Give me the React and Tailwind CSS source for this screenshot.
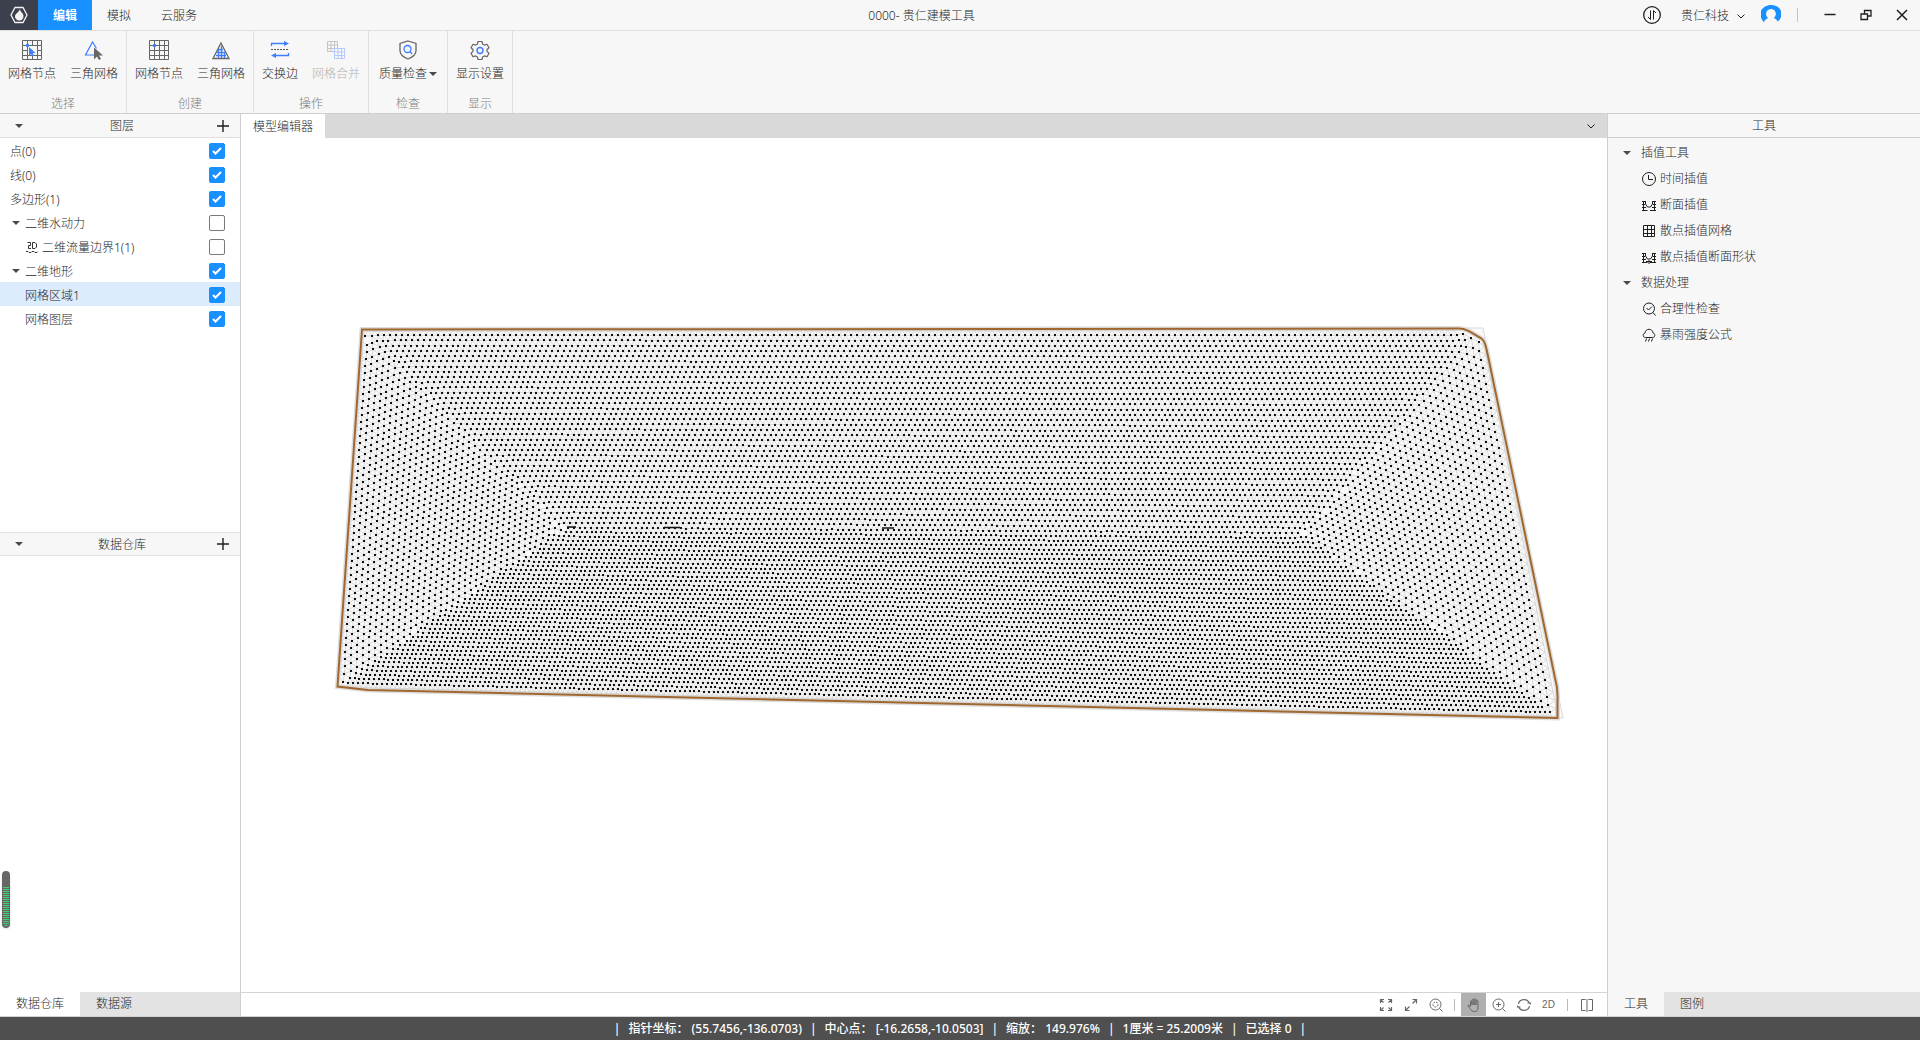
import React, { useMemo, useState } from "react";

const SEAM_LEFT = [566, 528];
const SEAM_RIGHT = [1300, 533];
const LAYERS = 38;

// corners of the grid area, with the end of the centre seam that each side shrinks to
const SIDES = [
  { from: [362, 330], to: [1478, 330], a: SEAM_LEFT, b: SEAM_RIGHT, step: 6, inner: 5.6, last: LAYERS },
  { from: [337, 687], to: [1557, 717], a: SEAM_LEFT, b: SEAM_RIGHT, step: 4.8, inner: 5, last: LAYERS - 1 },
  { from: [362, 330], to: [337, 687], a: SEAM_LEFT, b: SEAM_LEFT, step: 7, inner: 5.8, last: LAYERS - 1 },
  { from: [1481, 330], to: [1558, 717], a: SEAM_RIGHT, b: SEAM_RIGHT, step: 8.2, inner: 6, last: LAYERS - 1 },
];

const CELL = 12;

const lerp = (p, q, t) => [p[0] + (q[0] - p[0]) * t, p[1] + (q[1] - p[1]) * t];

// the top right corner is rounded off
const outsideCorner = (x, y) => x > 1459 && y < 331 + (x - 1459) * 0.55;

const bucketKey = (x, y) => Math.floor(x / CELL) * 1000 + Math.floor(y / CELL);

const addToBucket = (buckets, p) => {
  const key = bucketKey(p.x, p.y);
  if (!buckets.has(key)) buckets.set(key, []);
  buckets.get(key).push(p);
};

const nearby = (buckets, p) => {
  const found = [];
  for (let x = -1; x <= 1; x++) {
    for (let y = -1; y <= 1; y++) {
      const list = buckets.get(bucketKey(p.x + x * CELL, p.y + y * CELL));
      if (list) found.push(...list);
    }
  }
  return found;
};

const buildMesh = () => {
  const points = [];
  let buckets = new Map();

  for (let k = 0; k <= LAYERS; k++) {
    SIDES.forEach((side) => {
      if (k > side.last) return;
      const t = k / LAYERS;
      const start = lerp(side.from, side.a, t);
      const end = lerp(side.to, side.b, t);
      const length = Math.hypot(end[0] - start[0], end[1] - start[1]);
      const step = side.step + (side.inner - side.step) * t;
      const half = length / 2 + (k ? step * 0.2 : 0);
      const shift = k % 2 ? step / 2 : 0;
      for (let n = -Math.ceil(half / step) - 1; n * step + shift <= half; n++) {
        const d = n * step + shift;
        if (d < -half) continue;
        const [x, y] = lerp(start, end, 0.5 + d / length);
        if (outsideCorner(x, y)) continue;
        const p = { x, y, step, fixed: k === 0, id: points.length };
        const taken = nearby(buckets, p).some((q) => Math.hypot(p.x - q.x, p.y - q.y) < step * 0.68);
        if (taken) continue;
        points.push(p);
        addToBucket(buckets, p);
      }
    });
  }

  // push crowded nodes apart so the layers blend where they meet
  for (let pass = 0; pass < 10; pass++) {
    const moves = points.map((p) => {
      if (p.fixed) return [0, 0];
      let mx = 0;
      let my = 0;
      nearby(buckets, p).forEach((q) => {
        if (q === p) return;
        const d = Math.hypot(p.x - q.x, p.y - q.y) || 1;
        const reach = (p.step + q.step) * 0.6;
        if (d < reach) {
          mx += ((p.x - q.x) / d) * (reach - d) * 0.16;
          my += ((p.y - q.y) / d) * (reach - d) * 0.16;
        }
      });
      return [mx, my];
    });
    buckets = new Map();
    points.forEach((p, i) => {
      if (!outsideCorner(p.x + moves[i][0], p.y + moves[i][1])) {
        p.x += moves[i][0];
        p.y += moves[i][1];
      }
      addToBucket(buckets, p);
    });
  }

  let lines = "";
  let dots = "";
  points.forEach((p) => {
    if (!p.fixed) dots += `M${Math.round(p.x) - 1} ${Math.round(p.y)}h2`;
    nearby(buckets, p).forEach((q) => {
      if (q.id > p.id && Math.hypot(p.x - q.x, p.y - q.y) < (p.step + q.step) * 0.68) {
        lines += `M${p.x.toFixed(1)} ${p.y.toFixed(1)}L${q.x.toFixed(1)} ${q.y.toFixed(1)}`;
      }
    });
  });
  return { lines, dots };
};

const OUTLINE =
  "M362 329.5L1459 328.5C1466 328.5 1471 332 1482 339C1486 342 1486 348 1488 356L1555 678Q1558 688 1557.500 700V718L368 690L337.500 686.500Z";

const MeshView = () => {
  const mesh = useMemo(buildMesh, []);
  return (
    <svg className="h-full w-full" viewBox="241 138 1366 854">
      <path d="M361 328H1483L1563 718L365 691L336 688Z" fill="#fafafa" stroke="#d9d9d9" />
      <path d={OUTLINE} fill="#fafafa" stroke="#dedede" strokeWidth="5" />
      <path d={mesh.lines} fill="none" stroke="#d4d4d4" strokeWidth="0.9" />
      <path d={mesh.dots} fill="none" stroke="#111" strokeWidth="2" />
      <path d="M567 527h9M664 527.500h16M882 528h12" fill="none" stroke="#111" strokeWidth="1.400" />
      <path d={OUTLINE} fill="none" stroke="#a0672f" strokeWidth="2" />
    </svg>
  );
};

const Svg = ({ size = "size-5", box = 20, children }) => (
  <svg
    className={`${size} shrink-0`}
    viewBox={`0 0 ${box} ${box}`}
    fill="none"
    stroke="currentColor"
    aria-hidden="true"
  >
    {children}
  </svg>
);

const BLUE = "#3d7eff";

const GRID_LINES = "M.5 .5h19v19h-19zM.5 5.500h19M.5 10.500h19M.5 15.500h19M5.500 .5v19M10.500 .5v19M15.500 .5v19";

const SelectNodeIcon = () => (
  <Svg>
    <path d={GRID_LINES} stroke="#666" />
    <path d="M6 6h9v9h-9z" fill="#f7f7f7" stroke="none" />
    <circle cx="5.500" cy="5.500" r="1.800" fill={BLUE} stroke="none" />
    <path d="M7 7v9l2-2 1.500 2.500 1.500-1-1.500-2.500h3z" fill={BLUE} stroke="none" />
  </Svg>
);

const SelectTriangleIcon = () => (
  <Svg>
    <path d="M10 15H1.500L8.500 2l4 6.500" stroke={BLUE} strokeWidth="1.200" />
    <path d="M10 7.500v12l3-3 2 3.500 2-1-2-3.500h4z" fill="#666" stroke="none" />
  </Svg>
);

const CreateNodeIcon = () => (
  <Svg>
    <path d={GRID_LINES} stroke="#666" />
    <circle cx="5.500" cy="5.500" r="1.800" fill={BLUE} stroke="none" />
  </Svg>
);

const CreateTriangleIcon = () => (
  <Svg>
    <path d="M8 9.500h4M6 12.500h8M5 15.500h10M7.500 9v9M10.500 6v12M13.500 12v6" stroke={BLUE} strokeWidth="1.300" />
    <path d="M10 3L18 18.500H2z" stroke="#666" strokeWidth="1.300" />
  </Svg>
);

const SwapEdgeIcon = () => (
  <Svg>
    <path d="M1.500 6V3.500H15M18.500 13v2.500H5" stroke={BLUE} strokeWidth="1.300" />
    <path d="M14 1l5 2.500-5 2.500zM6 13l-5 2.500L6 18z" fill={BLUE} stroke="none" />
    <path d="M1 9.500h18" stroke="#555" strokeDasharray="2 1" />
  </Svg>
);

const MergeGridIcon = () => (
  <Svg>
    <path d="M1.500 1.500h10v10h-10zM1.500 5h10M1.500 8.500h10M5 1.500v10M8.500 1.500v10" stroke="#c4c4c4" />
    <path d="M8.500 8.500h10v10h-10zM8.500 12h10M8.500 15.500h10M12 8.500v10M15.500 8.500v10" fill="#f7f7f7" stroke="#b3cbff" />
  </Svg>
);

const ShieldIcon = () => (
  <Svg>
    <path d="M10 1l8 2.500v7c0 4-4 7-8 8.500-4-1.500-8-4.500-8-8.500v-7z" stroke="#666" strokeWidth="1.300" />
    <circle cx="9.500" cy="9" r="3.500" stroke={BLUE} strokeWidth="1.300" />
    <path d="M12 11.500l2 2.500" stroke={BLUE} strokeWidth="1.300" />
  </Svg>
);

const GearIcon = () => (
  <Svg>
    <path
      d="M8 1.500h4l.6 2.600 1.800 1 2.600-.8 2 3.400-2 1.800v1.900l2 1.900-2 3.400-2.600-.8-1.800 1-.6 2.600H8l-.6-2.600-1.800-1-2.600.8-2-3.400 2-1.900V9.500L1 7.700l2-3.400 2.600.8 1.800-1z"
      stroke="#666"
      strokeWidth="1.200"
      strokeLinejoin="round"
    />
    <circle cx="10" cy="10.500" r="3" stroke={BLUE} strokeWidth="1.400" />
  </Svg>
);

const Caret = () => (
  <Svg size="size-2" box={8}>
    <path d="M0 2h8L4 6z" fill="#4a4a4a" stroke="none" />
  </Svg>
);

const Chevron = () => (
  <Svg size="size-2" box={8}>
    <path d="M.5 2.500L4 6l3.500-3.500" />
  </Svg>
);

const ribbon = [
  {
    title: "选择",
    width: "w-[127px]",
    items: [
      { label: "网格节点", icon: <SelectNodeIcon /> },
      { label: "三角网格", icon: <SelectTriangleIcon /> },
    ],
  },
  {
    title: "创建",
    width: "w-[127px]",
    items: [
      { label: "网格节点", icon: <CreateNodeIcon /> },
      { label: "三角网格", icon: <CreateTriangleIcon /> },
    ],
  },
  {
    title: "操作",
    width: "w-[115px]",
    items: [
      { label: "交换边", icon: <SwapEdgeIcon /> },
      { label: "网格合并", icon: <MergeGridIcon />, disabled: true },
    ],
  },
  {
    title: "检查",
    width: "w-[79px]",
    items: [{ label: "质量检查", icon: <ShieldIcon />, menu: true }],
  },
  {
    title: "显示",
    width: "w-[65px]",
    items: [{ label: "显示设置", icon: <GearIcon /> }],
  },
];

const layerRows = [
  { id: "point", label: "点(0)", checked: true, indent: "pl-2.5" },
  { id: "line", label: "线(0)", checked: true, indent: "pl-2.5" },
  { id: "polygon", label: "多边形(1)", checked: true, indent: "pl-2.5" },
  { id: "hydro", label: "二维水动力", checked: false, indent: "pl-3", caret: true },
  { id: "flow", label: "二维流量边界1(1)", checked: false, indent: "pl-[26px]", icon: true },
  { id: "terrain", label: "二维地形", checked: true, indent: "pl-3", caret: true },
  { id: "region", label: "网格区域1", checked: true, indent: "pl-[25px]", selected: true },
  { id: "grid", label: "网格图层", checked: true, indent: "pl-[25px]" },
];

const FlowIcon = () => (
  <Svg size="size-3" box={12}>
    <path d="M1.500 1.500h3v3h-2v3H5M6.500 1.500v6H9l1.500-1.500V3L9 1.500zM0 10.500h2l1 1h2l1-1h2l1 1h2l1-1" stroke="#333" />
  </Svg>
);

const SectionShape = () => (
  <path d="M0 3.500h3.500M10.500 3.500H14M3.500 3v3l2 3h3l2-3V3M0 6.500h3M11 6.500h3M1.500 3v9M12.500 3v9M0 9.500h4M10 9.500h4M0 12.500h5.500M8 12.500h6" />
);

const toolGroups = [
  {
    title: "插值工具",
    items: [
      {
        label: "时间插值",
        icon: (
          <>
            <circle cx="7" cy="7" r="6.500" />
            <path d="M6.500 3v4.500H11" />
          </>
        ),
      },
      { label: "断面插值", icon: <SectionShape /> },
      {
        label: "散点插值网格",
        icon: <path d="M1.500 1.500h11v11h-11zM1.500 5.500h11M1.500 9.500h11M5.500 1.500v11M9.500 1.500v11M8 9.500h3M9.500 8v3" />,
      },
      {
        label: "散点插值断面形状",
        icon: (
          <>
            <SectionShape />
            <path d="M4 11.500h6M7 10v4" />
          </>
        ),
      },
    ],
  },
  {
    title: "数据处理",
    items: [
      {
        label: "合理性检查",
        icon: (
          <>
            <circle cx="7" cy="6.500" r="5.500" />
            <path d="M4.500 6l2 2L10 4.500M11 10.500l2.500 3" />
          </>
        ),
      },
      {
        label: "暴雨强度公式",
        icon: <path d="M3.500 9.500C.5 9.500.5 5.500 3 5c.5-5 7.500-5 8 0 2.500.5 2.500 4.500-.5 4.500zM4.500 10.500L3.500 13.500M7.500 10.500l-1 3M10.500 10.500l-1 3" />,
      },
    ],
  },
];

const viewButtons = [
  {
    label: "全屏",
    icon: <path d="M1.500 5V1.500H5M1.500 1.500l3 3M9 1.500h3.500V5M12.500 1.500l-3 3M1.500 9v3.500H5M1.500 12.500l3-3M12.500 9v3.500H9M12.500 12.500l-3-3" strokeWidth="1.200" />,
  },
  {
    label: "缩放至范围",
    icon: <path d="M8.500 1.500h4v4M12.500 1.500l-4 4M1.500 8.500v4h4M1.500 12.500l4-4" strokeWidth="1.200" />,
  },
  {
    label: "缩放至图层",
    icon: (
      <>
        <circle cx="6.500" cy="6.500" r="5.500" />
        <circle cx="6.500" cy="6.500" r="2.500" strokeDasharray="2 1" />
        <path d="M10.500 10.500l3 3" />
      </>
    ),
  },
  { divider: true },
  {
    label: "平移",
    active: true,
    icon: <path d="M3.500 8.500V3.500c0-1 1.500-1 1.500 0V7 2c0-1 2-1 2 0v5V1.500c0-1 2-1 2 0V7 3c0-1 2-1 2 0v7c0 2-1 3.500-3.500 3.500S4.500 12.500 3 10.500L1 8c-.5-1 1-1.500 2.500.5" />,
  },
  {
    label: "放大",
    icon: (
      <>
        <circle cx="6.500" cy="6.500" r="5.500" />
        <path d="M4 6.500h5M6.500 4v5M10.500 10.500l3 3" />
      </>
    ),
  },
  {
    label: "旋转",
    icon: <path d="M1.500 6C2.500 .5 10.500 0 12.500 5.500M12.500 8C11.500 13.500 3.500 14 1.500 8.500M10.500 5h3.500l-1 1.500M3.500 9H0l1-1.500" strokeWidth="1.200" />,
  },
  { label: "2D", text: true },
  { divider: true },
  {
    label: "分屏",
    icon: <path d="M5.500 1.500h-4v11h4M8.500 1.500h4v11h-4M7 1v13" />,
  },
];

const statusItems = [
  "指针坐标： (55.7456,-136.0703)",
  "中心点： [-16.2658,-10.0503]",
  "缩放： 149.976%",
  "1厘米 = 25.2009米",
  "已选择 0",
];

const TitleBar = () => (
  <header className="flex h-[31px] shrink-0 border-b border-[#dfdfdf]">
    <nav className="flex">
      <div className="flex w-[38px] items-center justify-center bg-[#3c404d] text-[#f2f2f2]">
        <Svg size="size-[18px]" box={18}>
          <path d="M5 1.500h8L17 9l-4 7.500H5L1 9z" strokeWidth="1.300" />
          <path d="M10 3c0 3 3.500 4 3.500 7 0 3-2 4.500-4 4.500S5 13 5 10.500C5 7.500 9 6.500 10 3z" fill="currentColor" stroke="none" />
        </Svg>
      </div>
      <button className="w-[54px] bg-[#1890ff] pt-0.5 font-bold text-white">编辑</button>
      <button className="w-[54px] pt-0.5">模拟</button>
      <button className="w-[66px] pt-0.5">云服务</button>
    </nav>
    <h1 className="flex-1 self-center pt-0.5 text-center">0000- 贵仁建模工具</h1>
    <div className="flex items-center justify-end pr-2.5 pl-3">
      <button aria-label="传输" className="mr-5">
        <Svg size="size-[18px]" box={18}>
          <circle cx="9" cy="9" r="8.300" strokeWidth="1.300" />
          <path d="M7.500 4.500v9L5 11M10.500 13.500v-9L13 7" />
        </Svg>
      </button>
      <button className="flex items-center gap-2 pt-0.5">
        贵仁科技
        <Chevron />
      </button>
      <button aria-label="用户" className="ml-4">
        <Svg>
          <path d="M4 18.500C-6 8 2 0 10 0s16 8 6 17.500z" fill="#1890ff" stroke="none" />
          <path d="M2.500 19c.5-4 3-5 4.500-6C3 9 6 4 10 4s7 5 3 9c1.500 1 4 2 4.500 6z" fill="#f7f7f7" stroke="none" />
        </Svg>
      </button>
      <span className="ml-4 h-3.5 w-px bg-[#c4c4c4]" />
      <button aria-label="最小化" className="ml-6">
        <Svg size="size-4" box={16}>
          <path d="M2.500 7.500h11" strokeWidth="1.500" />
        </Svg>
      </button>
      <button aria-label="还原" className="ml-5">
        <Svg size="size-4" box={16}>
          <path d="M3 7h6.500v5.500H3zM6.500 7V3.500h6.500v5.500H9.500" strokeWidth="1.300" />
        </Svg>
      </button>
      <button aria-label="关闭" className="ml-5">
        <Svg size="size-4" box={16}>
          <path d="M3 3l10 10M13 3L3 13" strokeWidth="1.500" />
        </Svg>
      </button>
    </div>
  </header>
);

const Ribbon = () => (
  <div className="flex h-[83px] shrink-0 border-b border-[#cfcfcf]">
    {ribbon.map((group) => (
      <section key={group.title} className={`${group.width} flex flex-col items-center justify-between border-r border-[#dfdfdf] pt-[9px] pb-px`}>
        <div className="flex gap-3.5">
          {group.items.map((item) => (
            <button key={item.label} disabled={item.disabled} className="flex flex-col items-center gap-1.5 disabled:text-[#b4b4b4]">
              {item.icon}
              <span className="flex items-center gap-0.5 whitespace-nowrap">
                {item.label}
                {item.menu && <Caret />}
              </span>
            </button>
          ))}
        </div>
        <h2 className="text-[#7d7d7d]">{group.title}</h2>
      </section>
    ))}
  </div>
);

const PanelHeader = ({ title, border }) => (
  <div className={`flex h-6 shrink-0 items-center ${border} border-[#dfdfdf] bg-[#f7f7f7] pr-[11px] pl-[15px]`}>
    <button aria-label="折叠">
      <Caret />
    </button>
    <h2 className="flex-1 pt-px pl-1 text-center">{title}</h2>
    <button aria-label="添加">
      <Svg size="size-3" box={12}>
        <path d="M6 0v12M0 6h12" strokeWidth="1.400" />
      </Svg>
    </button>
  </div>
);

const BottomTabs = ({ tabs, active }) => (
  <div className="flex h-[25px] shrink-0 border-b border-[#d4d4d4] bg-[#e3e3e3]">
    {tabs.map((tab) => (
      <button key={tab} className={tab === tabs[0] ? `px-4 ${active}` : "px-4"}>
        {tab}
      </button>
    ))}
  </div>
);

const LayerPanel = () => {
  const [visible, setVisible] = useState(() =>
    Object.fromEntries(layerRows.map((row) => [row.id, row.checked]))
  );

  const toggle = (id) => setVisible((prev) => ({ ...prev, [id]: !prev[id] }));

  return (
    <aside className="relative flex w-[241px] shrink-0 flex-col border-r border-[#cfcfcf] bg-white">
      <section className="flex flex-10 flex-col">
        <PanelHeader title="图层" border="border-b" />
        <ul>
          {layerRows.map((row) => (
            <li key={row.id} className={`flex h-6 items-center pt-0.5 pr-[15px] ${row.indent} ${row.selected ? "bg-[#dcecfd]" : ""}`}>
              {row.caret && (
                <span className="mr-[5px]">
                  <Caret />
                </span>
              )}
              {row.icon && (
                <span className="mr-1">
                  <FlowIcon />
                </span>
              )}
              <label htmlFor={row.id} className="flex-1 pt-0.5">
                {row.label}
              </label>
              <span className="grid">
                <input
                  id={row.id}
                  type="checkbox"
                  checked={visible[row.id]}
                  onChange={() => toggle(row.id)}
                  className="peer col-start-1 row-start-1 size-4 appearance-none rounded-xs border border-[#7a7a7a] bg-white checked:border-[#1890ff] checked:bg-[#1890ff]"
                />
                <svg className="pointer-events-none invisible col-start-1 row-start-1 size-4 peer-checked:visible" viewBox="0 0 16 16" fill="none" stroke="#fff" strokeWidth="2">
                  <path d="M4 8l2.500 2.500L12 5" />
                </svg>
              </span>
            </li>
          ))}
        </ul>
      </section>
      <section className="flex flex-11 flex-col">
        <PanelHeader title="数据仓库" border="border-y" />
      </section>
      <BottomTabs tabs={["数据仓库", "数据源"]} active="bg-white" />
      <div className="absolute bottom-[89px] left-0.5 flex h-[57px] w-2 flex-col rounded-full bg-[#666] px-px pt-4 pb-0.5 shadow">
        <div className="flex-1 rounded-b-full bg-[repeating-linear-gradient(to_bottom,#3fcf74_0px,#3fcf74_1px,#666_1px,#666_2px)]" />
      </div>
    </aside>
  );
};

const Editor = () => (
  <main className="flex min-w-0 flex-1 flex-col bg-white">
    <div className="flex h-6 shrink-0 items-center justify-between bg-[#d9d9d9] pr-3">
      <button className="h-full bg-white px-3 pt-0.5">模型编辑器</button>
      <button aria-label="更多">
        <Chevron />
      </button>
    </div>
    <div className="min-h-0 flex-1">
      <MeshView />
    </div>
    <div className="flex h-[25px] shrink-0 items-center justify-end border-y border-[#d4d4d4] pr-2 text-[#666]">
      {viewButtons.map((button, index) =>
        button.divider ? (
          <span key={index} className="mx-1.5 h-3 w-px bg-[#b8b8b8]" />
        ) : (
          <button
            key={index}
            aria-label={button.label}
            className={`flex h-full w-[25px] items-center justify-center ${button.active ? "bg-[#b0b0b0]" : ""}`}
          >
            {button.text ? (
              <span className="font-['Liberation_Sans'] text-[10px]">{button.label}</span>
            ) : (
              <Svg size="size-3.5" box={14}>
                {button.icon}
              </Svg>
            )}
          </button>
        )
      )}
    </div>
  </main>
);

const ToolPanel = () => (
  <aside className="flex w-[313px] shrink-0 flex-col border-l border-[#cfcfcf]">
    <h2 className="h-6 shrink-0 border-b border-[#cfcfcf] text-center leading-6">工具</h2>
    <div className="flex-1 pt-0.5">
      {toolGroups.map((group) => (
        <section key={group.title}>
          <h3 className="flex h-[26px] items-center gap-2.5 pl-[15px]">
            <Caret />
            {group.title}
          </h3>
          {group.items.map((item) => (
            <button key={item.label} className="flex h-[26px] w-full items-center gap-1 pl-[34px]">
              <Svg size="size-3.5" box={14}>
                {item.icon}
              </Svg>
              {item.label}
            </button>
          ))}
        </section>
      ))}
    </div>
    <BottomTabs tabs={["工具", "图例"]} active="bg-[#f7f7f7]" />
  </aside>
);

const StatusBar = () => (
  <footer className="flex h-[23px] shrink-0 items-center justify-center gap-2 bg-[#4f4f4f] font-medium whitespace-pre text-white">
    {statusItems.map((item) => (
      <React.Fragment key={item}>
        <span>|</span>
        <span>{item}</span>
      </React.Fragment>
    ))}
    <span>|</span>
  </footer>
);

const App = () => {
  return (
    <div className="flex h-screen flex-col overflow-hidden bg-[#f7f7f7] font-['Noto_Sans','Noto_Sans_CJK_SC',sans-serif] text-xs font-light text-[#1f1f1f]">
      <TitleBar />
      <Ribbon />
      <div className="flex min-h-0 flex-1">
        <LayerPanel />
        <Editor />
        <ToolPanel />
      </div>
      <StatusBar />
    </div>
  );
};

export default App;
